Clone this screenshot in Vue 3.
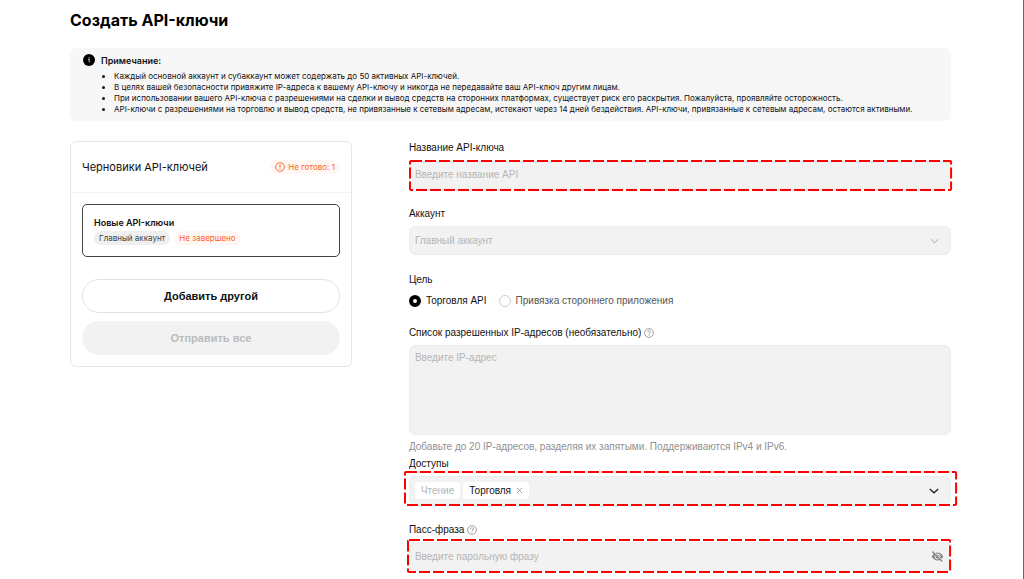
<script setup>
import { ref } from 'vue'

const notes = [
  'Каждый основной аккаунт и субаккаунт может содержать до 50 активных API-ключей.',
  'В целях вашей безопасности привяжите IP-адреса к вашему API-ключу и никогда не передавайте ваш API-ключ другим лицам.',
  'При использовании вашего API-ключа с разрешениями на сделки и вывод средств на сторонних платформах, существует риск его раскрытия. Пожалуйста, проявляйте осторожность.',
  'API-ключи с разрешениями на торговлю и вывод средств, не привязанные к сетевым адресам, истекают через 14 дней бездействия. API-ключи, привязанные к сетевым адресам, остаются активными.'
]

const name = ref('')
const purpose = ref('trade')
const ips = ref('')
const passphrase = ref('')
</script>

<template>
  <main class="page">
    <h1 class="title">Создать API-ключи</h1>

    <section class="note">
      <svg class="note-icon" viewBox="0 0 12 12" aria-hidden="true">
        <circle cx="6" cy="6" r="6" fill="#000" />
        <path d="M5 5.2h1.2v3.2M6.1 3.2v1" fill="none" stroke="#ccc" stroke-width="1" />
      </svg>
      <div class="note-body">
        <h2 class="note-title">Примечание:</h2>
        <ul class="note-list">
          <li v-for="n in notes" :key="n">{{ n }}</li>
        </ul>
      </div>
    </section>

    <div class="columns">
      <aside class="card">
        <header class="card-head">
          <h2 class="card-title">Черновики API-ключей</h2>
          <span class="tag tag-warn">
            <svg class="warn-icon" viewBox="0 0 10 10" aria-hidden="true">
              <circle cx="5" cy="5" r="4.3" fill="none" stroke="currentColor" stroke-width="0.9" />
              <path d="M5 2.4v3.2M5 6.6v1" stroke="currentColor" stroke-width="1" />
            </svg>
            Не готово: 1
          </span>
        </header>
        <div class="card-body">
          <div class="draft">
            <h3 class="draft-title">Новые API-ключи</h3>
            <div class="draft-tags">
              <span class="tag tag-grey">Главный аккаунт</span>
              <span class="tag tag-warn">Не завершено</span>
            </div>
          </div>
          <button type="button" class="btn btn-outline">Добавить другой</button>
          <button type="button" class="btn btn-muted" disabled>Отправить все</button>
        </div>
      </aside>

      <form class="form" @submit.prevent>
        <div class="field">
          <label class="label" for="key-name">Название API-ключа</label>
          <div class="control">
            <input id="key-name" v-model="name" class="input" type="text" placeholder="Введите название API" />
            <svg class="mark mark-name" aria-hidden="true"><rect x="1" y="1" rx="1" class="dash" /></svg>
          </div>
        </div>

        <div class="field">
          <label class="label" for="account">Аккаунт</label>
          <div class="control">
            <select id="account" class="input" disabled>
              <option>Главный аккаунт</option>
            </select>
            <svg class="chevron" viewBox="0 0 10 6" aria-hidden="true">
              <path d="M1 1l4 4 4-4" fill="none" stroke="currentColor" stroke-width="1.2" />
            </svg>
          </div>
        </div>

        <fieldset class="field">
          <legend class="label">Цель</legend>
          <div class="radios">
            <label class="radio" for="p-trade">
              <input id="p-trade" v-model="purpose" type="radio" name="purpose" value="trade" />
              <span>Торговля API</span>
            </label>
            <label class="radio" for="p-link">
              <input id="p-link" v-model="purpose" type="radio" name="purpose" value="link" />
              <span>Привязка стороннего приложения</span>
            </label>
          </div>
        </fieldset>

        <div class="field field-ip">
          <div class="label">
            <label for="ips">Список разрешенных IP-адресов (необязательно)</label>
            <svg class="help" viewBox="0 0 10 10" aria-hidden="true">
              <circle cx="5" cy="5" r="4.4" fill="none" stroke="currentColor" stroke-width="0.8" />
              <path d="M3.6 4.1c0-1.9 2.8-1.8 2.8-.1C6.4 5 5 5 5 6.1M5 6.9v.9" fill="none" stroke="currentColor" stroke-width="0.8" />
            </svg>
          </div>
          <textarea id="ips" v-model="ips" class="input area" placeholder="Введите IP-адрес"></textarea>
          <p class="hint">Добавьте до 20 IP-адресов, разделяя их запятыми. Поддерживаются IPv4 и IPv6.</p>
        </div>

        <div class="field">
          <span id="access-label" class="label">Доступы</span>
          <div class="control input chips" role="group" aria-labelledby="access-label">
            <span class="chip chip-off">Чтение</span>
            <span class="chip">
              Торговля
              <button type="button" class="bare" aria-label="Удалить Торговля">
                <svg class="close" viewBox="0 0 8 8" aria-hidden="true">
                  <path d="M1 1l6 6M7 1L1 7" stroke="currentColor" stroke-width="0.9" />
                </svg>
              </button>
            </span>
            <button type="button" class="bare chips-toggle" aria-label="Открыть список">
              <svg class="arrow" viewBox="0 0 10 6" aria-hidden="true">
                <path d="M0.8 1L5 4.8 9.2 1" fill="none" stroke="currentColor" stroke-width="1.3" />
              </svg>
            </button>
            <svg class="mark mark-access" aria-hidden="true"><rect x="1" y="1" rx="1" class="dash" /></svg>
          </div>
        </div>

        <div class="field">
          <div class="label">
            <label for="pass">Пасс-фраза</label>
            <svg class="help" viewBox="0 0 10 10" aria-hidden="true">
              <circle cx="5" cy="5" r="4.4" fill="none" stroke="currentColor" stroke-width="0.8" />
              <path d="M3.6 4.1c0-1.9 2.8-1.8 2.8-.1C6.4 5 5 5 5 6.1M5 6.9v.9" fill="none" stroke="currentColor" stroke-width="0.8" />
            </svg>
          </div>
          <div class="control">
            <input id="pass" v-model="passphrase" class="input" type="password" placeholder="Введите парольную фразу" />
            <button type="button" class="bare eye" aria-label="Показать фразу">
              <svg viewBox="0 0 12 10" aria-hidden="true">
                <path d="M0.6 5C2 2.4 4 1.2 6 1.2S10 2.4 11.4 5C10 7.6 8 8.8 6 8.8S2 7.6.6 5z" fill="currentColor" />
                <circle cx="6" cy="5" r="2.3" fill="none" stroke="#f2f2f2" stroke-width="0.9" />
                <path d="M2.2 .2l9 9" stroke="#f2f2f2" stroke-width="0.9" />
                <path d="M1.2 .4l9.2 9.2" stroke="currentColor" stroke-width="1.2" />
              </svg>
            </button>
            <svg class="mark mark-pass" aria-hidden="true"><rect x="1" y="1" rx="1" class="dash" /></svg>
          </div>
        </div>
      </form>
    </div>
  </main>
</template>

<style>
body {
  background: #fff;
}
</style>

<style scoped>
* {
  box-sizing: border-box;
}

.page {
  min-height: 100vh;
  padding: 10px 72px 6px 70px;
  border-right: 1px solid #666;
  background: #fff;
  color: #111;
  font-family: Inter, "Liberation Sans", sans-serif;
  font-size: 9px;
  line-height: 14px;
}

h1,
h2,
h3,
p,
ul {
  margin: 0;
}

.title {
  font-size: 16px;
  font-weight: 700;
  line-height: 20px;
  color: #000;
}

.note {
  display: flex;
  gap: 6px;
  margin-top: 18px;
  padding: 6px 13px;
  border-radius: 6px;
  background: #f7f7f7;
}

.note-icon {
  flex: none;
  width: 12px;
  height: 12px;
}

.note-title {
  font-size: 9px;
  font-weight: 600;
  line-height: 14px;
}

.note-list {
  padding: 3px 0 0 13px;
  font-size: 8px;
  line-height: 11px;
}

.columns {
  display: grid;
  grid-template-columns: 13fr 25fr;
  align-items: start;
  gap: 57px;
  margin-top: 20px;
}

.card {
  border: 1px solid #e6e6e6;
  border-radius: 6px;
}

.card-head {
  display: flex;
  align-items: center;
  justify-content: space-between;
  height: 51px;
  padding: 0 11px;
  border-bottom: 1px solid #f2f2f2;
}

.card-title {
  font-size: 11px;
  font-weight: 400;
}

.tag {
  display: inline-flex;
  align-items: center;
  gap: 3px;
  height: 14px;
  padding: 0 5px;
  border-radius: 7px;
  font-size: 8px;
}

.tag-warn {
  background: #fff7f3;
  color: #ff5f1f;
}

.tag-grey {
  background: #efefef;
  color: #444;
}

.warn-icon {
  width: 10px;
  height: 10px;
}

.card-body {
  display: flex;
  flex-direction: column;
  gap: 8px;
  padding: 11px;
}

.draft {
  margin-bottom: 14px;
  padding: 11px;
  border: 1px solid #444;
  border-radius: 5px;
}

.draft-title {
  font-size: 9px;
  font-weight: 600;
  line-height: 14px;
}

.draft-tags {
  display: flex;
  gap: 4px;
  margin-top: 1px;
}

.btn {
  height: 34px;
  border-radius: 17px;
  font: bold 11px "Liberation Sans", sans-serif;
}

.btn-outline {
  border: 1px solid #e2e2e2;
  background: #fff;
  color: #111;
}

.btn-muted {
  border: 0;
  background: #f2f2f2;
  color: #bbb;
}

.form {
  display: flex;
  flex-direction: column;
  gap: 18px;
  font-family: "Liberation Sans", sans-serif;
  font-size: 10px;
}

.field {
  display: flex;
  flex-direction: column;
  gap: 5px;
  min-width: 0;
  margin: 0;
  padding: 0;
  border: 0;
}

.field-ip {
  margin-bottom: -15px;
}

.label {
  display: flex;
  align-items: center;
  gap: 3px;
  height: 14px;
  padding: 0;
}

.help {
  width: 10px;
  height: 10px;
  color: #888;
}

.control {
  position: relative;
}

.input {
  display: block;
  width: 100%;
  height: 29px;
  margin: 0;
  padding: 0 5px;
  border: 1px solid #eee;
  border-radius: 6px;
  outline: 0;
  appearance: none;
  background: #f2f2f2;
  color: #111;
  font: inherit;
}

.input::placeholder {
  color: #b5b5b5;
  opacity: 1;
}

select.input:disabled {
  color: #b5b5b5;
  opacity: 1;
}

.area {
  height: 90px;
  padding: 5px;
  resize: none;
}

.hint {
  color: #909090;
}

.chevron {
  position: absolute;
  top: 12px;
  right: 12px;
  width: 9px;
  height: 6px;
  color: #bbb;
}

.radios {
  display: flex;
  gap: 12px;
  padding-top: 7px;
}

.radio {
  display: flex;
  align-items: center;
  gap: 5px;
  color: #555;
}

.radio:has(input:checked) {
  color: #111;
}

.radio input {
  width: 12px;
  height: 12px;
  margin: 0;
  border: 1px solid #ccc;
  border-radius: 50%;
  appearance: none;
  background: #fff;
}

.radio input:checked {
  border: 4px solid #000;
}

.chips {
  display: flex;
  align-items: center;
  gap: 3px;
}

.chip {
  display: flex;
  align-items: center;
  gap: 5px;
  height: 17px;
  padding: 0 6px;
  border-radius: 3px;
  background: #fff;
}

.chip-off {
  color: #b5b5b5;
}

.bare {
  display: flex;
  padding: 0;
  border: 0;
  background: none;
  color: #888;
}

.close {
  width: 7px;
  height: 7px;
}

.chips-toggle {
  margin-left: auto;
  margin-right: 6px;
  color: #222;
}

.arrow {
  width: 10px;
  height: 6px;
}

.eye {
  position: absolute;
  top: 9px;
  right: 7px;
  color: #888;
}

.eye svg {
  width: 13px;
  height: 11px;
}

.mark {
  position: absolute;
  overflow: visible;
  pointer-events: none;
}

.mark-name {
  top: 0;
  left: 0;
  width: calc(100% - 1px);
  height: 100%;
}

.mark-access {
  top: -6px;
  left: -6px;
  width: calc(100% + 11px);
  height: calc(100% + 6px);
}

.mark-pass {
  top: -3px;
  left: -2px;
  width: 100%;
  height: calc(100% + 3px);
}

.dash {
  width: 100%;
  height: 100%;
  fill: none;
  stroke: #f00;
  stroke-width: 2px;
  stroke-dasharray: 11 3;
}
</style>
